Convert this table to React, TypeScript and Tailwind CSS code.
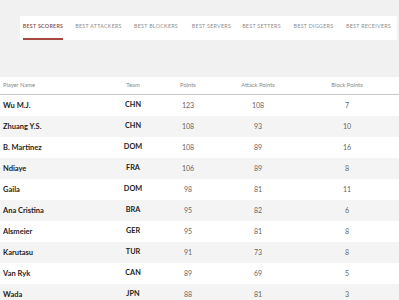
import React from "react";

const tabs: [string, string][] = [
  ["BEST SCORERS", "w-[40px]"],
  ["BEST ATTACKERS", "w-[45px] ml-[13px]"],
  ["BEST BLOCKERS", "w-[44px] ml-[13px]"],
  ["BEST SERVERS", "w-[41px] ml-[13px]"],
  ["BEST SETTERS", "w-[39px] ml-[10px]"],
  ["BEST DIGGERS", "w-[39px] ml-[13px]"],
  ["BEST RECEIVERS", "w-[45px] ml-[13px]"],
];

const rows: [string, string, number, number, number][] = [
  ["Wu M.J.", "CHN", 123, 108, 7],
  ["Zhuang Y.S.", "CHN", 108, 93, 10],
  ["B. Martinez", "DOM", 108, 89, 16],
  ["Ndiaye", "FRA", 106, 89, 8],
  ["Gaila", "DOM", 98, 81, 11],
  ["Ana Cristina", "BRA", 95, 82, 6],
  ["Alsmeier", "GER", 95, 81, 8],
  ["Karutasu", "TUR", 91, 73, 8],
  ["Van Ryk", "CAN", 89, 69, 5],
  ["Wada", "JPN", 88, 81, 3],
];

export default function App() {
  return (
    <div
      className="w-[399px] h-[300px] overflow-hidden bg-[#f1f1f1]"
      style={{ fontFamily: "Lato, 'Open Sans', sans-serif" }}
    >
      <div className="pt-[16px] pl-[20px]">
        <div className="h-[24px] w-[377px] bg-white flex pl-[3px]">
          {tabs.map(([t, w], i) => (
            <div
              key={t}
              className={
                "h-full flex items-center justify-center text-[5.3px] tracking-[0.3px] whitespace-nowrap shrink-0 " +
                w +
                " " +
                (i === 0
                  ? "text-[#8a4a3c] font-semibold border-b-2 border-[#a8483c]"
                  : "text-[#8e8e8e] border-b-2 border-transparent")
              }
            >
              {t}
            </div>
          ))}
        </div>
      </div>
      <div className="mt-[37px]">
        <div className="grid grid-cols-[105px_56px_54px_86px_92px] h-[18px] bg-white border-b border-[#c8c8c8] items-center text-[5.8px] text-[#888]">
          <div className="pl-[3px]">Player Name</div>
          <div className="text-center">Team</div>
          <div className="text-center">Points</div>
          <div className="text-center">Attack Points</div>
          <div className="text-center">Block Points</div>
        </div>
        {rows.map((r, i) => (
          <div
            key={r[0]}
            className={
              "grid grid-cols-[105px_56px_54px_86px_92px] h-[21px] items-center " +
              (i % 2 === 0 ? "bg-white" : "bg-[#f4f4f4]")
            }
          >
            <div className="pl-[3px] text-[7.5px] font-bold text-[#1e1e1e]">{r[0]}</div>
            <div className="text-center text-[7.3px] font-bold text-[#1e1e1e]">{r[1]}</div>
            <div className="text-center text-[7px] text-[#666]">{r[2]}</div>
            <div className="text-center text-[7px] text-[#666]">{r[3]}</div>
            <div className="text-center text-[7px] text-[#666]">{r[4]}</div>
          </div>
        ))}
      </div>
    </div>
  );
}
